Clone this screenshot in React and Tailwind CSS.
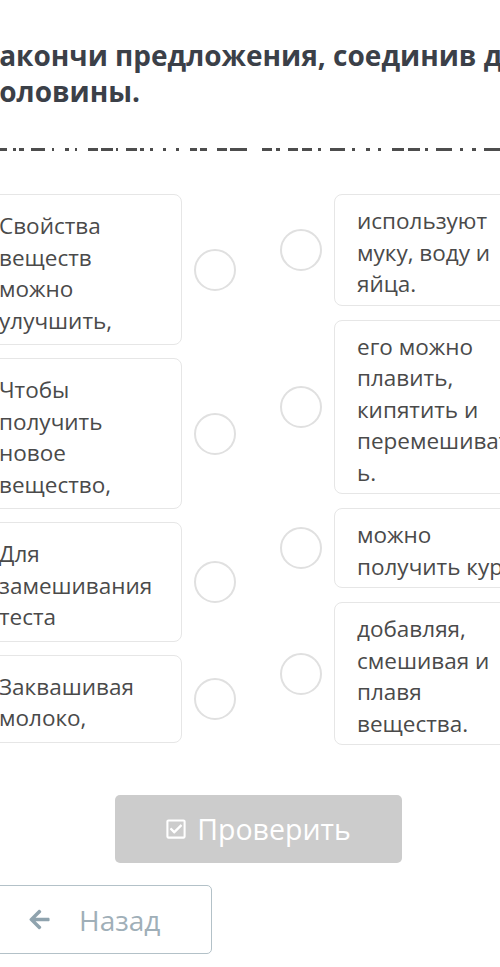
import React from "react";
import { FaRegCheckSquare, FaArrowLeft } from "react-icons/fa";

const left = [
  "Свойства веществ можно улучшить,",
  "Чтобы получить новое вещество,",
  "Для замешивания теста",
  "Заквашивая молоко,",
];

const right = [
  "используют муку, воду и яйца.",
  "его можно плавить, кипятить и перемешивать.",
  "можно получить курт.",
  "добавляя, смешивая и плавя вещества.",
];

// the broken dotted rule under the title
const dashes = [
  [0, 7], [13, 16], [19, 24], [31, 45], [52, 54], [65, 69], [75, 77], [88, 98],
  [101, 113], [116, 118], [126, 137], [140, 144], [150, 153], [163, 166], [176, 179],
  [190, 197], [200, 207], [217, 227], [230, 247], [262, 272], [276, 280], [288, 298],
  [302, 312], [318, 321], [330, 345], [352, 355], [366, 370], [378, 381], [392, 404],
  [408, 420], [425, 428], [436, 452], [460, 463], [472, 476], [484, 500],
];

function Circle() {
  return <div className="w-[42px] h-[42px] shrink-0 rounded-full border-2 border-[#e0e0e0] bg-white" />;
}

export default function App() {
  return (
    <div className="w-[500px] h-[967px] overflow-hidden bg-white font-['Open_Sans',sans-serif]">
      <div className="ml-[-24px] w-[564px]">
        <h1 className="pl-[5px] pt-[37px] text-[28px] leading-[36px] font-bold text-[#3b4048]">
          Закончи предложения, соединив две половины.
        </h1>

        <svg className="mt-[39px] ml-[24px] block" width="500" height="3">
          {dashes.map(([a, b]) => (
            <rect key={a} x={a} y="0" width={b - a} height="3" fill="#4d4d4d" />
          ))}
        </svg>

        <div className="mt-[43px] flex justify-between">
          <div className="flex flex-col gap-[13px]">
            {left.map((t) => (
              <div key={t} className="flex items-center gap-[12px]">
                <div className="w-[206px] rounded-[8px] border border-[#e6e6e6] px-[22px] pt-[15px] pb-[8px] text-[22.5px] leading-[31.5px] text-[#4a4a4a] break-words">
                  {t}
                </div>
                <Circle />
              </div>
            ))}
          </div>
          <div className="flex flex-col gap-[14px]">
            {right.map((t) => (
              <div key={t} className="flex items-center gap-[12px]">
                <Circle />
                <div className="w-[206px] rounded-[8px] border border-[#e6e6e6] pl-[22px] pr-[19px] pt-[10px] pb-[5px] text-[22.5px] leading-[31.5px] text-[#4a4a4a] break-words">
                  {t}
                </div>
              </div>
            ))}
          </div>
        </div>

        <div className="mt-[50px] flex justify-center">
          <button className="w-[287px] h-[68px] rounded-[5px] bg-[#cccccc] text-white text-[28.5px] flex items-center justify-center gap-[10px]">
            <FaRegCheckSquare className="w-[22px] h-[22px]" />
            <span>Проверить</span>
          </button>
        </div>

        <button className="mt-[22px] w-[236px] h-[69px] rounded-[5px] border border-[#b3c1c8] bg-white flex items-center text-[28px] text-[#a0afb8]">
          <FaArrowLeft className="ml-[51px] w-[23px] h-[23px] text-[#8fa3ae]" />
          <span className="ml-[28px]">Назад</span>
        </button>
      </div>
    </div>
  );
}
